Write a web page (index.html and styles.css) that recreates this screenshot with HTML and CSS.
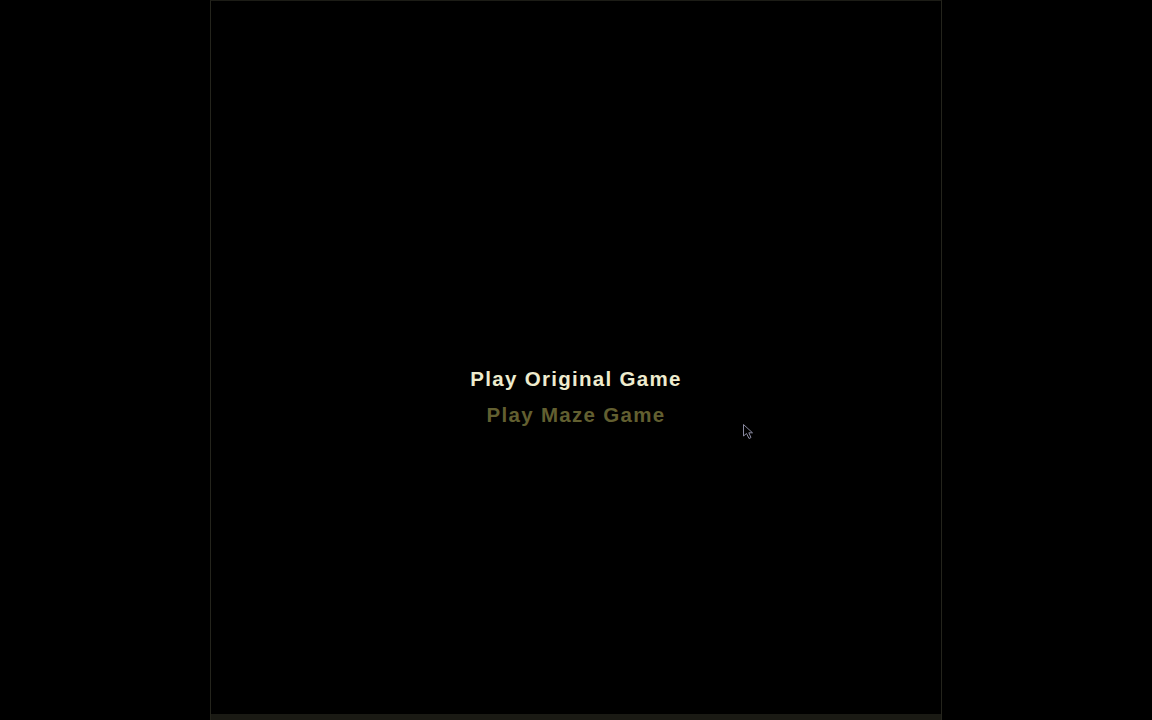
FILE: index.html
```html
<!DOCTYPE html>
<html>
<head>
<meta charset="utf-8">
<link rel="stylesheet" href="styles.css">
</head>
<body>
<div class="stage">
  <div class="frame">
    <div class="menu">
      <div class="item active">Play Original Game</div>
      <div class="item">Play Maze Game</div>
    </div>
    <div class="floor"></div>
  </div>
  <svg class="cursor" width="14" height="18" viewBox="0 0 14 18">
    <path d="M1.5 1.5 L1.5 13 L4.5 10.5 L7 15.5 L9 14.5 L6.8 9.8 L10.5 9.8 Z" fill="#000" stroke="#8a8aa0" stroke-width="1"/>
  </svg>
</div>
</body>
</html>
```
FILE: styles.css
```css
html, body {
  margin: 0;
  padding: 0;
  background: #000;
  height: 100%;
}
.stage {
  position: relative;
  width: 1152px;
  height: 720px;
  display: flex;
  justify-content: center;
}
.frame {
  width: 732px;
  height: 720px;
  border-left: 1px solid #24241c;
  border-right: 1px solid #24241c;
  border-top: 1px solid #1c1c16;
  box-sizing: border-box;
  display: flex;
  flex-direction: column;
}
.menu {
  flex: 1;
  display: flex;
  flex-direction: column;
  align-items: center;
  justify-content: center;
  gap: 13px;
  padding-top: 78px;
  font-family: "Liberation Sans", Arial, sans-serif;
  font-weight: bold;
  font-size: 20.5px;
  letter-spacing: 1.3px;
}
.item {
  color: #625f30;
  line-height: 23px;
}
.item.active {
  color: #eeecce;
}
.floor {
  height: 6px;
  background: #1a1a14;
}
.cursor {
  position: absolute;
  left: 742px;
  top: 423px;
}
```
